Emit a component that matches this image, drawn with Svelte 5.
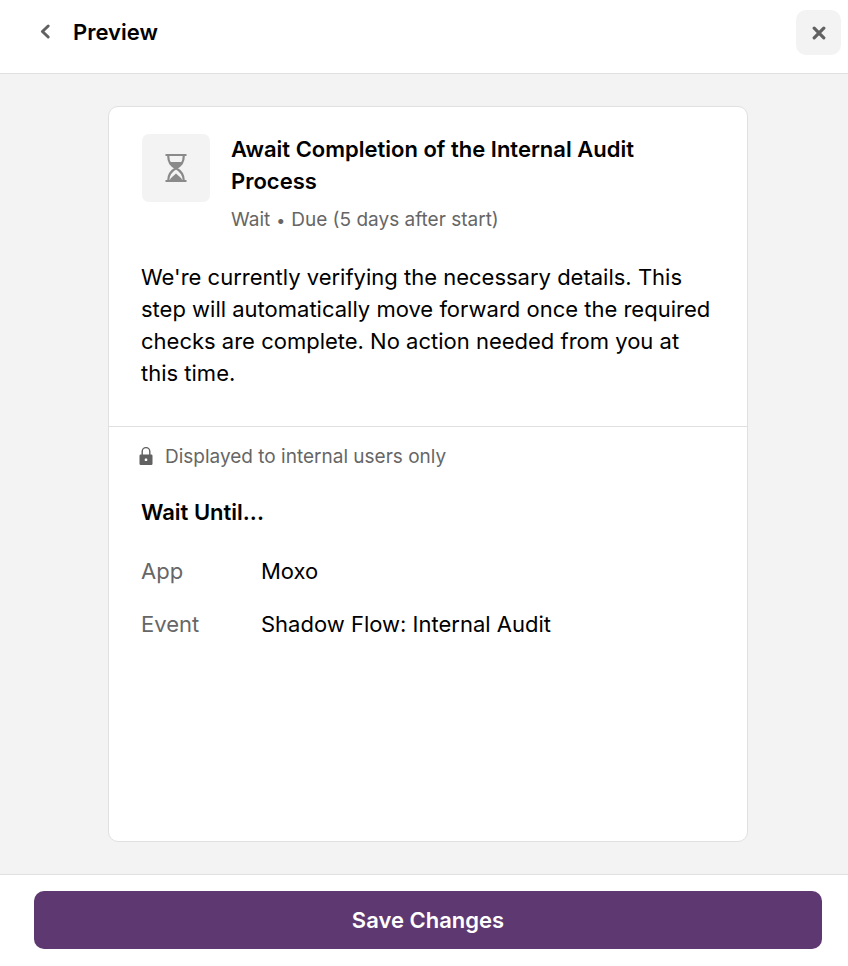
<script>
  const details = [
    { label: 'App', value: 'Moxo' },
    { label: 'Event', value: 'Shadow Flow: Internal Audit' }
  ];
</script>

<div class="screen">
  <header>
    <button class="back" aria-label="Back">
      <svg width="12" height="18" viewBox="0 0 12 18"><path d="M9.200 3 3.400 8.500l5.800 5.500" fill="none" stroke="#616161" stroke-width="3" stroke-linecap="round" stroke-linejoin="round" /></svg>
    </button>
    <h1>Preview</h1>
    <button class="close" aria-label="Close">
      <svg width="14" height="14" viewBox="0 0 14 14"><path d="M2.200 2.200l9.600 9.600M11.800 2.200l-9.600 9.600" stroke="#616161" stroke-width="3.200" stroke-linecap="round" /></svg>
    </button>
  </header>

  <main>
    <article>
      <section class="summary">
        <div class="heading">
          <div class="tile">
            <svg width="24" height="30" viewBox="0 0 24 30">
              <path d="M1.500 2h21M1.500 28h21" stroke="#8a8a8a" stroke-width="2" />
              <path d="M4.200 2.500C4.200 10 7 12.500 12 15.300C17 12.500 19.800 10 19.800 2.500M4.200 27.700C4.200 21 7 18 12 15.300C17 18 19.800 21 19.800 27.700" fill="none" stroke="#8a8a8a" stroke-width="2.200" />
              <path d="M5.500 9h13c-1.500 3-4 4.500-6.500 6.800C9.500 13.500 7 12 5.500 9zM5.500 27.500c1.500-3.200 4-4.500 6.500-6.900 2.500 2.400 5 3.700 6.500 6.900z" fill="#8a8a8a" />
            </svg>
          </div>
          <div class="titles">
            <h2>Await Completion of the Internal Audit Process</h2>
            <p class="meta"><span>Wait</span><span class="dot">•</span><span>Due (5 days after start)</span></p>
          </div>
        </div>
        <p class="description">We're currently verifying the necessary details. This step will automatically move forward once the required checks are complete. No action needed from you at this time.</p>
      </section>

      <section class="internal">
        <p class="notice">
          <svg width="14" height="20" viewBox="0 0 14 20"><path d="M3.200 8V4.400a3.800 3.800 0 0 1 7.600 0V8" fill="none" stroke="#616161" stroke-width="1.400" /><rect x="0.500" y="7.500" width="13" height="10.500" rx="1.200" fill="#616161" /><rect x="5.800" y="11.600" width="2.400" height="2.400" rx="0.600" fill="#fff" /></svg>
          Displayed to internal users only
        </p>
        <h3>Wait Until...</h3>
        <dl>
          {#each details as item}
            <div class="row"><dt>{item.label}</dt><dd>{item.value}</dd></div>
          {/each}
        </dl>
      </section>
    </article>
  </main>

  <footer><button class="save">Save Changes</button></footer>
</div>

<style>
  :global(body) { margin: 0; }
  .screen {
    display: flex; flex-direction: column; min-height: 100vh;
    background: #f3f3f3; color: #000;
    font-family: Inter, "Liberation Sans", sans-serif; font-size: 22px; line-height: 32px;
  }
  h1, h2, h3, p, dl, dd { margin: 0; }
  h1, h2, h3 { font-size: 22px; font-weight: 600; line-height: 32px; }
  svg { display: block; flex: none; }
  button { font: inherit; border: 0; padding: 0; cursor: pointer; }
  header {
    box-sizing: border-box; height: 74px; padding: 10px 7px 18px 33px;
    display: flex; align-items: flex-start; background: #fff; border-bottom: 1px solid #e0e0e0;
  }
  h1 { padding-top: 6px; }
  .back { width: 24px; height: 44px; display: flex; align-items: center; justify-content: center; background: none; margin-right: 16px; }
  .close { width: 45px; height: 45px; margin-left: auto; display: flex; align-items: center; justify-content: center; background: #f3f3f3; border-radius: 10px; }
  main { flex: 1; display: flex; padding: 32px 100px 32px 108px; }
  article { flex: 1; background: #fff; border: 1px solid #e0e0e0; border-radius: 10px; }
  .summary { padding: 26px 32px 37px; border-bottom: 1px solid #e0e0e0; }
  .heading { display: flex; gap: 21px; padding-left: 1px; }
  .tile { width: 68px; height: 68px; margin-top: 1px; flex: none; display: flex; align-items: center; justify-content: center; background: #f3f3f3; border-radius: 7px; }
  .meta, .notice { font-size: 19px; color: #666; }
  .meta { display: flex; margin-top: 7px; }
  .dot { width: 21px; font-size: 16px; text-align: center; }
  .description { margin-top: 25px; }
  .internal { padding: 14px 32px; }
  .notice { display: flex; align-items: center; gap: 12px; margin-left: -2px; }
  h3 { margin-top: 23px; }
  dl { margin-top: 27px; display: grid; gap: 21px; }
  .row { display: flex; }
  dt { width: 120px; color: #666; }
  footer { padding: 16px 26px 17px 34px; background: #fff; border-top: 1px solid #e0e0e0; }
  .save { width: 100%; height: 58px; display: block; background: #5e3871; color: #fff; font-weight: 600; border-radius: 10px; }
</style>
